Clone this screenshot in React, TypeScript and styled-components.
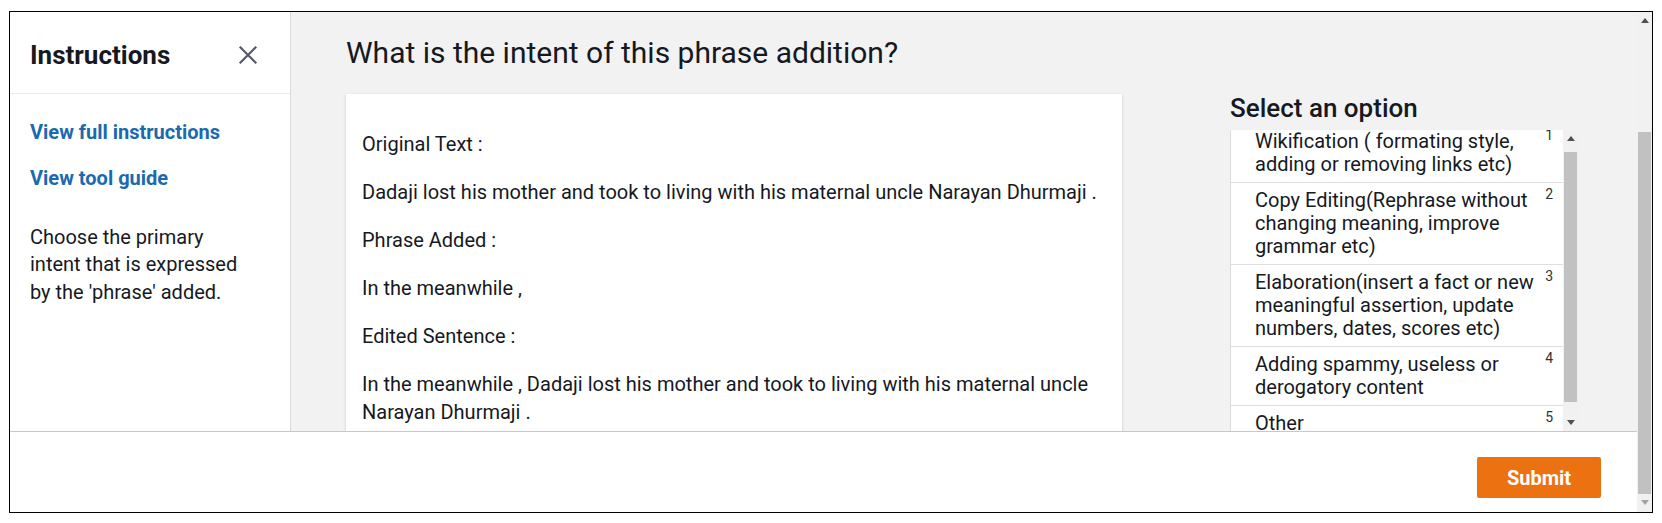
import React from "react";
import styled, { createGlobalStyle } from "styled-components";

const GlobalStyle = createGlobalStyle`
  html, body { margin: 0; padding: 0; background: #ffffff; }
  body { font-family: Roboto, "Noto Sans", "Liberation Sans", sans-serif; color: #16191f; }
  * { box-sizing: border-box; }
`;

const Frame = styled.div`
  margin: 11px 0 0 9px;
  width: 1644px;
  height: 502px;
  border: 1px solid #000;
  display: flex;
  overflow: hidden;
`;

const Page = styled.div`
  flex: 1;
  display: flex;
  flex-direction: column;
  min-width: 0;
`;

const Body = styled.div`
  height: 419px;
  display: flex;
  overflow: hidden;
`;

const Sidebar = styled.aside`
  width: 281px;
  flex: none;
  background: #fff;
  border-right: 1px solid #dadada;
  box-shadow: 1px 0 2px rgba(0, 0, 0, 0.04);
  display: flex;
  flex-direction: column;
`;

const SideHeader = styled.div`
  height: 82px;
  flex: none;
  border-bottom: 1px solid #eaeded;
  display: flex;
  align-items: center;
  justify-content: space-between;
  padding: 4px 33px 0 20px;
`;

const SideTitle = styled.h2`
  margin: 0;
  font-size: 26px;
  line-height: 32px;
  font-weight: 700;
  color: #16191f;
`;

const CloseButton = styled.button`
  border: 0;
  background: none;
  padding: 0;
  width: 18px;
  height: 18px;
  display: flex;
  cursor: pointer;
`;

const SideBody = styled.div`
  padding: 26px 20px 0 20px;
  display: flex;
  flex-direction: column;
`;

const SideLink = styled.a`
  font-size: 20px;
  line-height: 24px;
  font-weight: 700;
  color: #1b6ab0;
  text-decoration: none;
  margin-bottom: 22px;
  cursor: pointer;
`;

const SideText = styled.p`
  margin: 12px 0 0 0;
  max-width: 215px;
  font-size: 20px;
  line-height: 27.3px;
  color: #16191f;
`;

const Main = styled.main`
  flex: 1;
  background: #f2f2f2;
  display: flex;
  padding-left: 55px;
  min-width: 0;
`;

const TaskColumn = styled.section`
  width: 776px;
  flex: none;
  display: flex;
  flex-direction: column;
`;

const Question = styled.h1`
  margin: 23px 0 23px 0;
  font-size: 30px;
  line-height: 36px;
  font-weight: 400;
  color: #16191f;
`;

const Card = styled.div`
  flex: 1;
  background: #fff;
  padding: 16px;
  box-shadow: 0 1px 3px rgba(0, 0, 0, 0.16);
`;

const Para = styled.p`
  margin: 20px 0;
  font-size: 20px;
  line-height: 28px;
  color: #16191f;
`;

const OptionColumn = styled.section`
  width: 348px;
  flex: none;
  margin-left: 108px;
  display: flex;
  flex-direction: column;
`;

const OptionTitle = styled.h3`
  margin: 81px 0 7px 0;
  font-size: 26px;
  line-height: 30px;
  font-weight: 500;
  color: #16191f;
`;

const ListBox = styled.div`
  height: 301px;
  display: flex;
  background: #fff;
  border-left: 1px solid #dcdcdc;
`;

const ListViewport = styled.div`
  flex: 1;
  overflow: hidden;
  min-width: 0;
`;

const ListInner = styled.div`
  margin-top: -6px;
`;

const OptionRow = styled.div`
  display: flex;
  gap: 6px;
  padding: 6px 10px 6px 24px;
  border-bottom: 1px solid #dedede;
  cursor: pointer;
`;

const OptionLabel = styled.span`
  flex: 1;
  font-size: 20px;
  line-height: 23px;
  color: #16191f;
`;

const OptionKey = styled.span`
  flex: none;
  font-size: 14px;
  line-height: 10px;
  color: #333;
`;

const ScrollTrack = styled.div`
  width: 15px;
  flex: none;
  background: #f1f1f1;
  display: flex;
  flex-direction: column;
`;

const ScrollArrow = styled.div`
  height: 17px;
  flex: none;
  display: flex;
  align-items: center;
  justify-content: center;
`;

const ScrollGap = styled.div<{ $size: number; $fill?: boolean }>`
  height: ${(p) => p.$size}px;
  flex: ${(p) => (p.$fill ? 1 : "none")};
`;

const ScrollThumb = styled.div<{ $size: number }>`
  height: ${(p) => p.$size}px;
  flex: none;
  margin: 0 1px;
  background: #c1c1c1;
`;

const Footer = styled.footer`
  flex: 1;
  border-top: 1px solid #c8c8c8;
  background: #fff;
  display: flex;
  justify-content: flex-end;
  align-items: flex-start;
  padding: 25px 36px 0 0;
`;

const SubmitButton = styled.button`
  width: 124px;
  height: 41px;
  border: 0;
  border-radius: 2px;
  background: #ec7211;
  color: #fff;
  font-family: Roboto, "Noto Sans", sans-serif;
  font-size: 20px;
  font-weight: 700;
  cursor: pointer;
`;

const Arrow = ({ up, color }: { up: boolean; color: string }) => (
  <svg width="8" height="5" viewBox="0 0 8 5">
    <polygon points={up ? "0,5 8,5 4,0" : "0,0 8,0 4,5"} fill={color} />
  </svg>
);

const options = [
  "Wikification ( formating style, adding or removing links etc)",
  "Copy Editing(Rephrase without changing meaning, improve grammar etc)",
  "Elaboration(insert a fact or new meaningful assertion, update numbers, dates, scores etc)",
  "Adding spammy, useless or derogatory content",
  "Other",
];

export default function App() {
  return (
    <>
      <GlobalStyle />
      <Frame>
        <Page>
          <Body>
            <Sidebar>
              <SideHeader>
                <SideTitle>Instructions</SideTitle>
                <CloseButton aria-label="Close">
                  <svg width="18" height="18" viewBox="0 0 18 18">
                    <path d="M1.5 1.5 L16.5 16.5 M16.5 1.5 L1.5 16.5" stroke="#545b64" strokeWidth="2.2" strokeLinecap="square" />
                  </svg>
                </CloseButton>
              </SideHeader>
              <SideBody>
                <SideLink>View full instructions</SideLink>
                <SideLink>View tool guide</SideLink>
                <SideText>Choose the primary intent that is expressed by the 'phrase' added.</SideText>
              </SideBody>
            </Sidebar>
            <Main>
              <TaskColumn>
                <Question>What is the intent of this phrase addition?</Question>
                <Card>
                  <Para>Original Text :</Para>
                  <Para>Dadaji lost his mother and took to living with his maternal uncle Narayan Dhurmaji .</Para>
                  <Para>Phrase Added :</Para>
                  <Para>In the meanwhile ,</Para>
                  <Para>Edited Sentence :</Para>
                  <Para>In the meanwhile , Dadaji lost his mother and took to living with his maternal uncle Narayan Dhurmaji .</Para>
                </Card>
              </TaskColumn>
              <OptionColumn>
                <OptionTitle>Select an option</OptionTitle>
                <ListBox>
                  <ListViewport>
                    <ListInner>
                      {options.map((o, i) => (
                        <OptionRow key={o}>
                          <OptionLabel>{o}</OptionLabel>
                          <OptionKey>{i + 1}</OptionKey>
                        </OptionRow>
                      ))}
                    </ListInner>
                  </ListViewport>
                  <ScrollTrack>
                    <ScrollArrow><Arrow up color="#505050" /></ScrollArrow>
                    <ScrollGap $size={5} />
                    <ScrollThumb $size={250} />
                    <ScrollGap $size={0} $fill />
                    <ScrollArrow><Arrow up={false} color="#505050" /></ScrollArrow>
                  </ScrollTrack>
                </ListBox>
              </OptionColumn>
            </Main>
          </Body>
          <Footer>
            <SubmitButton>Submit</SubmitButton>
          </Footer>
        </Page>
        <ScrollTrack>
          <ScrollArrow><Arrow up color="#505050" /></ScrollArrow>
          <ScrollGap $size={103} />
          <ScrollThumb $size={362} />
          <ScrollArrow><Arrow up={false} color="#a3a3a3" /></ScrollArrow>
        </ScrollTrack>
      </Frame>
    </>
  );
}
